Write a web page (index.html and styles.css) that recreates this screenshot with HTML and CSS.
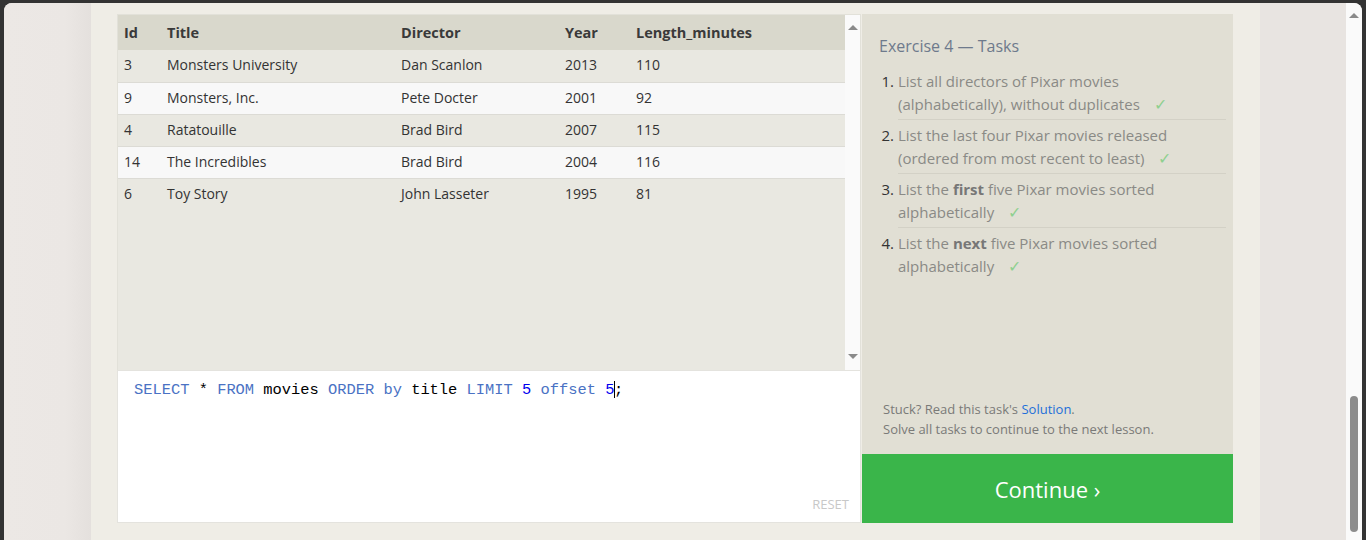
FILE: index.html
```html
<!DOCTYPE html>
<html>
<head>
<meta charset="utf-8">
<link rel="stylesheet" href="styles.css">
</head>
<body>
<div class="window">
  <div class="viewport">
    <div class="gutter-left"></div>
    <div class="column">
      <div class="left-pane">
        <div class="results">
          <div class="table-wrap">
            <table class="results-table">
              <thead>
                <tr><th class="c-id">Id</th><th class="c-title">Title</th><th class="c-dir">Director</th><th class="c-year">Year</th><th>Length_minutes</th></tr>
              </thead>
              <tbody>
                <tr><td>3</td><td>Monsters University</td><td>Dan Scanlon</td><td>2013</td><td>110</td></tr>
                <tr><td>9</td><td>Monsters, Inc.</td><td>Pete Docter</td><td>2001</td><td>92</td></tr>
                <tr><td>4</td><td>Ratatouille</td><td>Brad Bird</td><td>2007</td><td>115</td></tr>
                <tr><td>14</td><td>The Incredibles</td><td>Brad Bird</td><td>2004</td><td>116</td></tr>
                <tr><td>6</td><td>Toy Story</td><td>John Lasseter</td><td>1995</td><td>81</td></tr>
              </tbody>
            </table>
          </div>
          <div class="mini-scroll">
            <span class="tri tri-up"></span>
            <span class="tri tri-down"></span>
          </div>
        </div>
        <div class="editor">
          <div class="code"><span class="kw">SELECT</span> * <span class="kw">FROM</span> movies <span class="kw">ORDER</span> <span class="kw">by</span> title <span class="kw">LIMIT</span> <span class="num">5</span> <span class="kw">offset</span> <span class="num">5</span><span class="cursor"></span>;</div>
          <div class="reset">RESET</div>
        </div>
      </div>
      <div class="right-pane">
        <div class="tasks">
          <h2 class="tasks-title">Exercise 4 — Tasks</h2>
          <ol class="task-list">
            <li><span class="n">1.</span><span class="t">List all directors of Pixar movies<br>(alphabetically), without duplicates <span class="check">✓</span></span></li>
            <li><span class="n">2.</span><span class="t">List the last four Pixar movies released<br>(ordered from most recent to least) <span class="check">✓</span></span></li>
            <li><span class="n">3.</span><span class="t">List the <b>first</b> five Pixar movies sorted<br>alphabetically <span class="check">✓</span></span></li>
            <li><span class="n">4.</span><span class="t">List the <b>next</b> five Pixar movies sorted<br>alphabetically <span class="check">✓</span></span></li>
          </ol>
          <div class="help">
            <p>Stuck? Read this task's <a class="link">Solution</a>.</p>
            <p>Solve all tasks to continue to the next lesson.</p>
          </div>
        </div>
        <div class="continue">Continue ›</div>
      </div>
    </div>
    <div class="gutter-right"></div>
  </div>
  <div class="page-scroll">
    <span class="tri tri-up"></span>
    <div class="thumb"></div>
  </div>
</div>
</body>
</html>
```

FILE: styles.css
```css
* { box-sizing: border-box; }
html, body { margin: 0; padding: 0; }
body {
  background: #333333;
  width: 1366px;
  height: 540px;
  overflow: hidden;
  font-family: "Open Sans", "Noto Sans", sans-serif;
  color: #333;
}
.window {
  margin: 3px 4px 0 4px;
  height: 537px;
  border-radius: 8px 8px 0 0;
  overflow: hidden;
  display: flex;
  background: #ece8e5;
}
.viewport {
  flex: 1;
  display: flex;
}
.gutter-left {
  width: 87px;
  background: linear-gradient(to right, #ece8e5 0%, #ebe7e4 70%, #e4e0dd 100%);
}
.gutter-right {
  flex: 1;
  background: #e8e4e1;
}
.column {
  width: 1169px;
  background: #efede6;
  padding: 11px 27px 0 26px;
  display: flex;
  align-items: flex-start;
}
.left-pane {
  width: 744px;
  display: flex;
  flex-direction: column;
}
.results {
  height: 356px;
  display: flex;
  border: 1px solid #e2e1d9;
  border-bottom: none;
  background: #e9e8e1;
}
.table-wrap {
  flex: 1;
}
.results-table {
  width: 100%;
  border-collapse: collapse;
  font-size: 14px;
}
.results-table th {
  background: #d9d8cc;
  height: 35px;
  text-align: left;
  font-weight: 700;
  font-size: 14.5px;
  padding: 0 6px 1px 6px;
  color: #3a3a3a;
}
.results-table td {
  height: 32px;
  padding: 0 6px 2px 6px;
  border-bottom: 1px solid #dcdbd5;
  color: #333;
}
.results-table tbody tr:nth-child(odd) td { background: #e9e8e1; }
.results-table tbody tr:nth-child(even) td { background: #f8f8f8; }
.results-table tbody tr:last-child td { border-bottom: none; }
.c-id { width: 43px; }
.c-title { width: 234px; }
.c-dir { width: 164px; }
.c-year { width: 71px; }

.mini-scroll {
  width: 15px;
  background: #fafafa;
  position: relative;
}
.tri {
  position: absolute;
  left: 50%;
  width: 0;
  height: 0;
  border-left: 5px solid transparent;
  border-right: 5px solid transparent;
  margin-left: -5px;
}
.tri-up { top: 10px; border-bottom: 5px solid #8a8a8a; }
.tri-down { bottom: 11px; border-top: 5px solid #8a8a8a; }

.editor {
  height: 153px;
  background: #fff;
  border: 1px solid #e4e3de;
  position: relative;
  padding: 10px 16px;
}
.code {
  font-family: "Liberation Mono", "DejaVu Sans Mono", monospace;
  font-size: 15.4px;
  color: #000;
  white-space: pre;
  line-height: 18px;
}
.kw { color: #4a72c4; }
.num { color: #0000ee; }
.cursor {
  display: inline-block;
  width: 0;
  height: 17px;
  border-left: 1.5px solid #000;
  vertical-align: -4px;
  margin-right: -1.5px;
}
.reset {
  position: absolute;
  right: 11px;
  bottom: 9px;
  font-size: 13px;
  color: #c8c8c8;
}

.right-pane {
  width: 371px;
  margin-left: 1px;
  display: flex;
  flex-direction: column;
}
.tasks {
  height: 440px;
  background: #e1dfd4;
  padding: 21px 7px 0 17px;
  display: flex;
  flex-direction: column;
}
.tasks-title {
  margin: 0;
  font-weight: 400;
  font-size: 16px;
  color: #6e7a8c;
  line-height: 22px;
}
.task-list {
  list-style: none;
  margin: 13px 0 0 0;
  padding: 0;
}
.task-list li {
  display: flex;
  font-size: 15px;
  line-height: 22.5px;
  color: #8a8a86;
}
.task-list .n {
  width: 19px;
  flex: none;
  color: #333;
  text-align: right;
  padding-right: 4px;
}
.task-list .t {
  flex: 1;
  padding: 0 0 4px 0;
  margin-bottom: 4px;
  border-bottom: 1px solid #d3d1c6;
}
.task-list li:last-child .t { border-bottom: none; }
.task-list b { color: #777; }
.check {
  color: #8fd08f;
  margin-left: 10px;
  font-size: 16px;
}
.help {
  margin-top: auto;
  padding: 0 0 15px 4px;
  font-size: 13px;
  color: #7a7a78;
  line-height: 20px;
}
.help p { margin: 0; }
.link { color: #1e6fd9; }
.continue {
  height: 69px;
  background: #3ab54a;
  color: #fff;
  font-size: 22px;
  display: flex;
  align-items: center;
  justify-content: center;
}

.page-scroll {
  width: 16px;
  background: #fafafa;
  position: relative;
}
.page-scroll .tri-up { top: 10px; border-bottom-width: 5px; }
.thumb {
  position: absolute;
  left: 4px;
  width: 8px;
  top: 393px;
  height: 136px;
  border-radius: 4px;
  background: #8c8c8c;
}
```
